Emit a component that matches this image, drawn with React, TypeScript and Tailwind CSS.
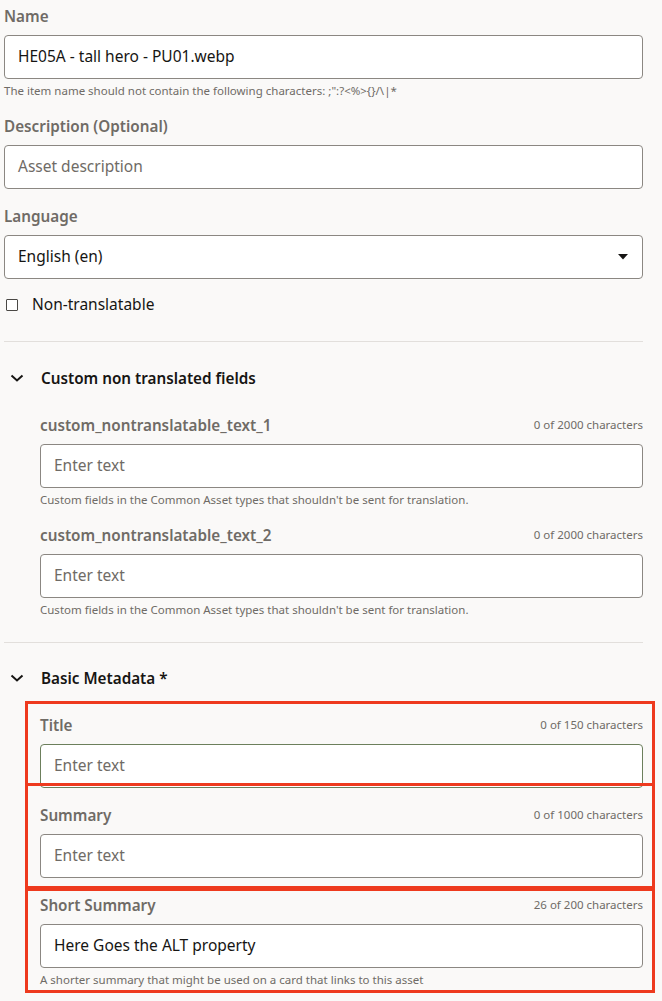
import React from 'react';

const font = { fontFamily: '"Noto Sans", "Open Sans", sans-serif' };

const Chevron = () => (
    <svg width="14" height="8" viewBox="0 0 14 8" className="shrink-0">
        <polyline points="1.5,1.5 7,6.5 12.5,1.5" fill="none" stroke="#161513" strokeWidth="2" />
    </svg>
);

const Counter = ({ text }: { text: string }) => (
    <span className="text-[11.5px] leading-4 text-[#6f6b66]">{text}</span>
);

const TextBox = ({ value, placeholder, green }: { value?: string; placeholder?: string; green?: boolean }) => (
    <div className={`h-[44px] flex items-center px-[13px] bg-white rounded-[4px] border ${green ? 'border-[#6c7f5c]' : 'border-[#8b8782]'}`}>
        {value
            ? <span className="text-[15.5px] text-[#161513]">{value}</span>
            : <span className="text-[15.5px] text-[#6f6b66]">{placeholder}</span>}
    </div>
);

const Field = ({ label, counter, value, placeholder, help, green }: any) => (
    <div>
        <div className="flex items-center justify-between h-5 mb-[9px]">
            <span className="text-[15.25px] font-semibold text-[#6f6b66]">{label}</span>
            {counter && <Counter text={counter} />}
        </div>
        <TextBox value={value} placeholder={placeholder} green={green} />
        {help && <p className="mt-1 text-[11.5px] leading-4 text-[#6f6b66]">{help}</p>}
    </div>
);

const Section = ({ title, children }: any) => (
    <div>
        <div className="flex items-center h-5 gap-[17px] pl-[6px]">
            <Chevron />
            <span className="text-[15.25px] font-semibold text-[#161513]">{title}</span>
        </div>
        <div className="pl-9 pt-[27px]">{children}</div>
    </div>
);

const App = () => {
    return (
        <div style={font} className="min-h-screen w-full bg-[#faf9f8] pl-1 pr-[19px] pt-[6px]">
            <div className="flex flex-col gap-[17px]">
                <Field label="Name" value="HE05A - tall hero - PU01.webp" help={'The item name should not contain the following characters: ;":?<%>{}/\\|*'} />
                <Field label="Description (Optional)" placeholder="Asset description" />
                <div>
                    <div className="h-5 mb-[9px] flex items-center">
                        <span className="text-[15.25px] font-semibold text-[#6f6b66]">Language</span>
                    </div>
                    <div className="h-[44px] flex items-center justify-between px-[13px] bg-white rounded-[4px] border border-[#8b8782]">
                        <span className="text-[15.5px] text-[#161513]">English (en)</span>
                        <svg width="10" height="6" viewBox="0 0 10 6" className="mr-[1px]">
                            <polygon points="0,0 10,0 5,5.5" fill="#161513" />
                        </svg>
                    </div>
                </div>
            </div>

            <label className="flex items-center gap-[14px] h-5 mt-4 pl-[2px]">
                <span className="w-[12px] h-[12px] border-[1.5px] border-[#4a4845] rounded-[1px] bg-white" />
                <span className="text-[15.5px] text-[#161513]">Non-translatable</span>
            </label>

            <div className="h-px bg-[#e2dfdc] mt-[26px] mb-[26px]" />

            <Section title="Custom non translated fields">
                <div className="flex flex-col gap-[17px]">
                    <Field label="custom_nontranslatable_text_1" counter="0 of 2000 characters" placeholder="Enter text"
                        help="Custom fields in the Common Asset types that shouldn't be sent for translation." />
                    <Field label="custom_nontranslatable_text_2" counter="0 of 2000 characters" placeholder="Enter text"
                        help="Custom fields in the Common Asset types that shouldn't be sent for translation." />
                </div>
            </Section>

            <div className="h-px bg-[#e2dfdc] mt-[24px] mb-[25px]" />

            <Section title="Basic Metadata *">
                <div className="relative flex flex-col gap-[17px]">
                    <Field label="Title" counter="0 of 150 characters" placeholder="Enter text" green />
                    <Field label="Summary" counter="0 of 1000 characters" placeholder="Enter text" />
                    <Field label="Short Summary" counter="26 of 200 characters" value="Here Goes the ALT property"
                        help="A shorter summary that might be used on a card that links to this asset" />

                    <div className="absolute left-[-15px] right-[-12px] top-[-14px] h-[85px] border-[3px] border-[#ee3a1e]" />
                    <div className="absolute left-[-15px] right-[-12px] top-[68px] h-[106px] border-[3px] border-[#ee3a1e]" />
                    <div className="absolute left-[-15px] right-[-12px] top-[173px] h-[105px] border-[3px] border-[#ee3a1e]" />
                </div>
            </Section>
            <div className="h-4" />
        </div>
    );
};

export default App;
